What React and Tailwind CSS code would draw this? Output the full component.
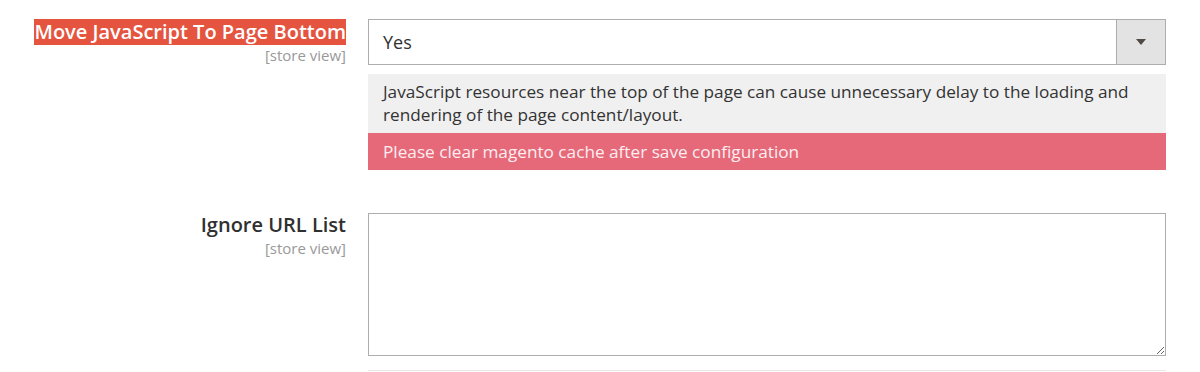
export default function App() {
  return (
    <div className="w-[1200px] h-[372px] bg-white overflow-hidden" style={{ fontFamily: '"Open Sans", sans-serif' }}>
      <div className="flex pt-[19px]">
        <div className="w-[346px] flex flex-col items-end">
          <span className="bg-[#e4543f] text-white text-[20px] font-semibold leading-[26px]">Move JavaScript To Page Bottom</span>
          <span className="text-[#999] text-[15px] leading-[20px]">[store view]</span>
        </div>
        <div className="ml-[22px] w-[798px] flex flex-col">
          <div className="h-[46px] flex border border-[#adadad] bg-white">
            <div className="flex-1 flex items-center pl-[14px] text-[18px] text-[#303030]">Yes</div>
            <div className="w-[49px] border-l border-[#adadad] bg-[#e3e3e3] flex items-center justify-center">
              <svg width="12" height="8" viewBox="0 0 12 8"><path d="M1 1h10L6 7z" fill="#514943" /></svg>
            </div>
          </div>
          <div className="mt-[9px] bg-[#f0f0f0] text-[#333] text-[17.2px] leading-[23px] px-[15px] pt-[6px] pb-[7px]">
            JavaScript resources near the top of the page can cause unnecessary delay to the loading and rendering of the page content/layout.
          </div>
          <div className="h-[37px] bg-[#e6697a] text-[#fdeef0] text-[17.2px] flex items-center px-[15px]">
            Please clear magento cache after save configuration
          </div>
        </div>
      </div>
      <div className="flex mt-[43px]">
        <div className="w-[346px] flex flex-col items-end -mt-[1px]">
          <span className="text-[#303030] text-[20px] font-semibold leading-[26px]">Ignore URL List</span>
          <span className="text-[#999] text-[15px] leading-[20px]">[store view]</span>
        </div>
        <div className="ml-[22px] w-[798px] flex flex-col">
          <textarea className="h-[143px] w-full border border-[#adadad] bg-white resize-y outline-none" />
          <div className="mt-[14px] h-px bg-[#e8e8e8]" />
        </div>
      </div>
    </div>
  );
}
